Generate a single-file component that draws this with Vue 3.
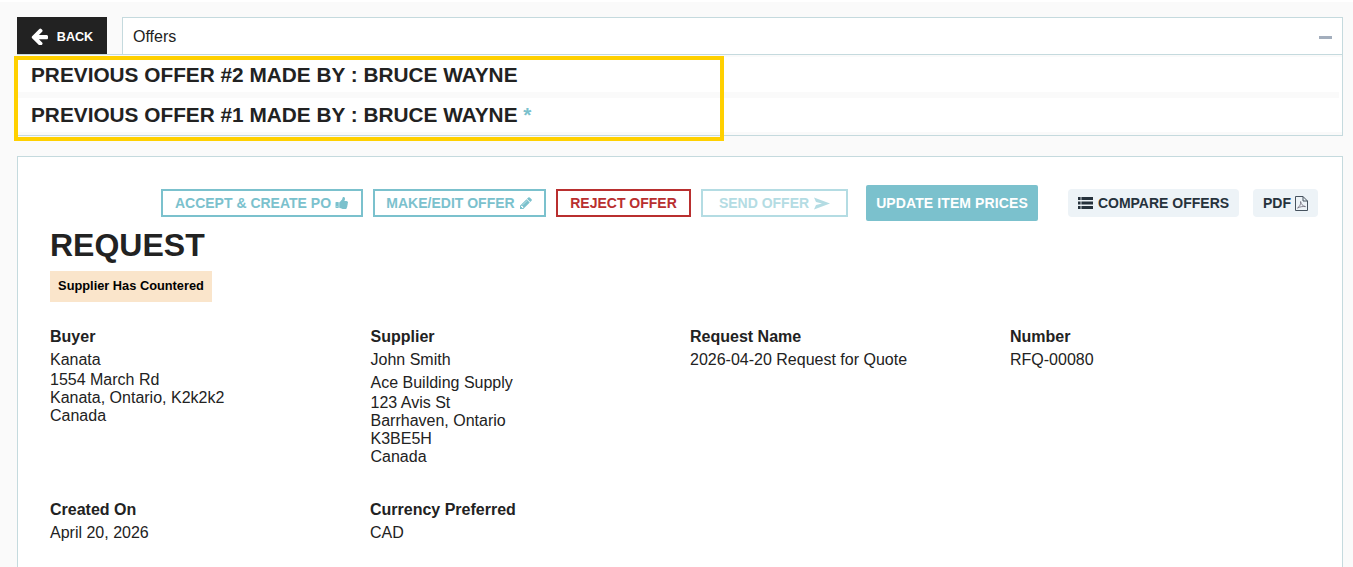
<template>
  <div class="page">
    <div class="top">
      <button class="back">
        <svg width="17" height="17" viewBox="128 128 1536 1536"><path d="M1664 896v128q0 53-32.5 90.5t-84.5 37.5h-704l293 294q38 36 38 90t-38 90l-75 76q-38 38-90 38-53 0-91-38l-651-652q-37-37-37-90 0-52 37-91l651-650q38-38 91-38 52 0 90 38l75 74q38 38 38 91t-38 91l-293 293h704q52 0 84.5 37.5t32.5 90.5z" fill="#fff" /></svg>
        BACK
      </button>
      <div class="title-bar">
        <span>Offers</span>
        <i class="minus"></i>
      </div>
    </div>
    <div class="history">
      <div class="row">PREVIOUS OFFER #2 MADE BY : BRUCE WAYNE</div>
      <div class="row">PREVIOUS OFFER #1 MADE BY : BRUCE WAYNE <span class="star">*</span></div>
      <div class="highlight"></div>
    </div>

    <div class="card">
      <div class="actions">
        <button class="btn outline">ACCEPT &amp; CREATE PO
          <svg width="14" height="14" viewBox="0 0 1792 1792"><path d="M320 1344q0-26-19-45t-45-19q-27 0-45.5 19t-18.5 45q0 27 18.5 45.5t45.5 18.5q26 0 45-18.5t19-45.5zm160-512v640q0 26-19 45t-45 19h-288q-26 0-45-19t-19-45v-640q0-26 19-45t45-19h288q26 0 45 19t19 45zm1184 0q0 86-55 149 15 44 15 76 3 76-43 137 17 56 0 117-15 57-54 94 9 112-49 181-64 76-197 78h-129q-66 0-144-15.5t-121.5-29-120.5-39.5q-123-43-158-44-26-1-45-19.5t-19-44.5v-641q0-25 18-43.5t43-20.5q24-2 76-59t101-121q68-87 101-120 18-18 31-48t17.5-48.5 13.5-60.5q7-39 12.5-61t19.5-52 34-50q19-19 45-19 46 0 82.5 10.5t60 26 40 40.5 24 45 12 50 5 45 .5 39q0 38-9.5 76t-19 60-27.5 56q-3 6-10 18t-11 22-8 24h277q78 0 135 57t57 135z" fill="#7bc1cd" /></svg>
        </button>
        <button class="btn outline">MAKE/EDIT OFFER
          <svg width="14" height="14" viewBox="0 0 1792 1792"><path d="M491 1536l91-91-235-235-91 91v107h128v128h107zm523-928q0-22-22-22-10 0-17 7l-542 542q-7 7-7 17 0 22 22 22 10 0 17-7l542-542q7-7 7-17zm-54-192l416 416-832 832h-416v-416zm683 96q0 53-37 90l-166 166-416-416 166-165q36-38 90-38 53 0 91 38l235 234q37 39 37 91z" fill="#7bc1cd" /></svg>
        </button>
        <button class="btn reject">REJECT OFFER</button>
        <button class="btn outline send">SEND OFFER
          <svg width="16" height="13" viewBox="0 0 16 13"><path d="M0 0.5 L16 6.5 L0 12.5 L2 8 L8 6.5 L2 5Z" fill="#b4dce3" /></svg>
        </button>
        <button class="btn update">UPDATE ITEM PRICES</button>
        <button class="btn light compare">
          <svg width="15" height="12" viewBox="0 0 15 12"><path d="M0 0H2.6V3H0Z M3.4 0H15V3H3.4Z M0 4.5H2.6V7.5H0Z M3.4 4.5H15V7.5H3.4Z M0 9H2.6V12H0Z M3.4 9H15V12H3.4Z" fill="#26323c" /></svg>
          COMPARE OFFERS
        </button>
        <button class="btn light pdf">PDF
          <svg width="13" height="15" viewBox="0 0 13 15"><path d="M0.5 0.5H8L12.5 5V14.5H0.5Z M8 0.5V5H12.5" fill="#edf3f7" stroke="#46525e" /><path d="M2.5 12 C4.8 10.5 6 8 5.6 5.5 C6 8 7.5 10 10.5 10.6 C7.5 10.2 5 10.8 2.5 12Z" fill="none" stroke="#6f6a78" stroke-width="0.8" /></svg>
        </button>
      </div>
      <h1>REQUEST</h1>
      <div class="status">Supplier Has Countered</div>

      <div class="info">
        <div class="col col-1">
          <h4>Buyer</h4>
          <p class="first">Kanata</p>
          <p class="address">1554 March Rd<br>Kanata, Ontario, K2k2k2<br>Canada</p>
        </div>
        <div class="col col-2">
          <h4>Supplier</h4>
          <p class="first">John Smith</p>
          <p class="company">Ace Building Supply</p>
          <p class="address">123 Avis St<br>Barrhaven, Ontario<br>K3BE5H<br>Canada</p>
        </div>
        <div class="col col-3">
          <h4>Request Name</h4>
          <p class="first">2026-04-20 Request for Quote</p>
        </div>
        <div class="col">
          <h4>Number</h4>
          <p class="first">RFQ-00080</p>
        </div>
      </div>

      <div class="info second">
        <div class="col created">
          <h4>Created On</h4>
          <p class="first">April 20, 2026</p>
        </div>
        <div class="col">
          <h4>Currency Preferred</h4>
          <p class="first">CAD</p>
        </div>
      </div>
    </div>
  </div>
</template>

<script setup>
</script>

<style>
html, body {
  margin: 0;
  background: #fff;
  overflow: hidden;
}
</style>

<style scoped>
.page {
  height: 565px;
  margin-top: 2px;
  padding: 15px 10px 0 17px;
  background: #fafafa;
  box-sizing: border-box;
  overflow: hidden;
  font-family: "Liberation Sans", Arial, sans-serif;
  color: #222;
}
.top {
  display: flex;
  gap: 15px;
  height: 37px;
}
.back {
  width: 90px;
  height: 37px;
  display: flex;
  align-items: center;
  justify-content: center;
  gap: 9px;
  padding: 2px 0 0 0;
  border: 0;
  background: #222;
  color: #fff;
  font: bold 12.6px "Liberation Sans", Arial, sans-serif;
}
.title-bar {
  flex: 1;
  display: flex;
  align-items: center;
  justify-content: space-between;
  padding: 2px 10px 0 10px;
  background: #fff;
  border: 1px solid #c5dade;
  border-bottom: 0;
  font-size: 16px;
}
.minus {
  width: 13px;
  height: 3px;
  background: #a3aebd;
}
.history {
  position: relative;
  height: 82px;
  padding: 2px 3px 3px 0;
  border: 1px solid #c5dade;
  border-left: 0;
  box-sizing: border-box;
  background: #fff;
  box-shadow: inset 0 -3px 0 #fafafa, inset 0 2px 0 #fafafa;
}
.row {
  height: 34px;
  line-height: 35px;
  padding-left: 14px;
  font-size: 20.8px;
  font-weight: bold;
  background: #fff;
}
.row + .row {
  margin-top: 6px;
  line-height: 36px;
}
.star {
  color: #7bc1cd;
}
.history::after {
  content: "";
  position: absolute;
  left: 0;
  right: 3px;
  top: 37px;
  height: 6px;
  background: #fafafa;
}
.highlight {
  position: absolute;
  z-index: 1;
  left: -3px;
  top: 1px;
  width: 710px;
  height: 85px;
  box-sizing: border-box;
  border: 4px solid #ffd000;
}
.card {
  margin-top: 20px;
  height: 500px;
  padding: 28px 24px 0 32px;
  background: #fff;
  border: 1px solid #c5dade;
}
.actions {
  display: flex;
  align-items: center;
  justify-content: flex-end;
  height: 36px;
}
.btn {
  height: 28px;
  display: flex;
  align-items: center;
  justify-content: center;
  gap: 4px;
  padding: 0;
  box-sizing: border-box;
  background: #fff;
  font: bold 14px "Liberation Sans", Arial, sans-serif;
  white-space: nowrap;
}
.outline {
  border: 2px solid #7bc1cd;
  color: #7bc1cd;
  width: 202px;
  margin-right: 10px;
}
.outline + .outline {
  width: 173px;
}
.reject {
  width: 135px;
  border: 2px solid #b92f2f;
  color: #b92f2f;
  margin-right: 10px;
}
.outline.send {
  width: 147px;
  margin-right: 18px;
  border-color: #b4dce3;
  color: #b4dce3;
  gap: 5px;
}
.update {
  width: 172px;
  height: 36px;
  margin-right: 30px;
  border: 0;
  border-radius: 2px;
  background: #7bc1cd;
  color: #fff;
  letter-spacing: 0.1px;
}
.light {
  border: 0;
  border-radius: 4px;
  background: #edf3f7;
  color: #26323c;
}
.compare {
  width: 171px;
  margin-right: 14px;
  gap: 5px;
}
.pdf {
  width: 65px;
}
h1 {
  margin: 5px 0 0;
  font-size: 32px;
  line-height: 38px;
}
.status {
  width: 162px;
  height: 31px;
  margin-top: 7px;
  background: #fae5cb;
  color: #000;
  font-size: 12.8px;
  font-weight: bold;
  line-height: 29px;
  text-align: center;
}
.info {
  display: flex;
  margin-top: 26px;
  font-size: 16px;
}
.second {
  margin-top: 35px;
}
.created {
  width: 320px;
}
.col-1 {
  width: 320.5px;
}
.col-2 {
  width: 319.5px;
}
.col-3 {
  width: 320px;
}
h4 {
  margin: 0;
  font-size: 16px;
  line-height: 18px;
}
p {
  margin: 0;
  line-height: 18px;
}
.first {
  margin-top: 5px;
}
.company {
  margin-top: 5px;
}
.address {
  margin-top: 2px;
}
</style>
